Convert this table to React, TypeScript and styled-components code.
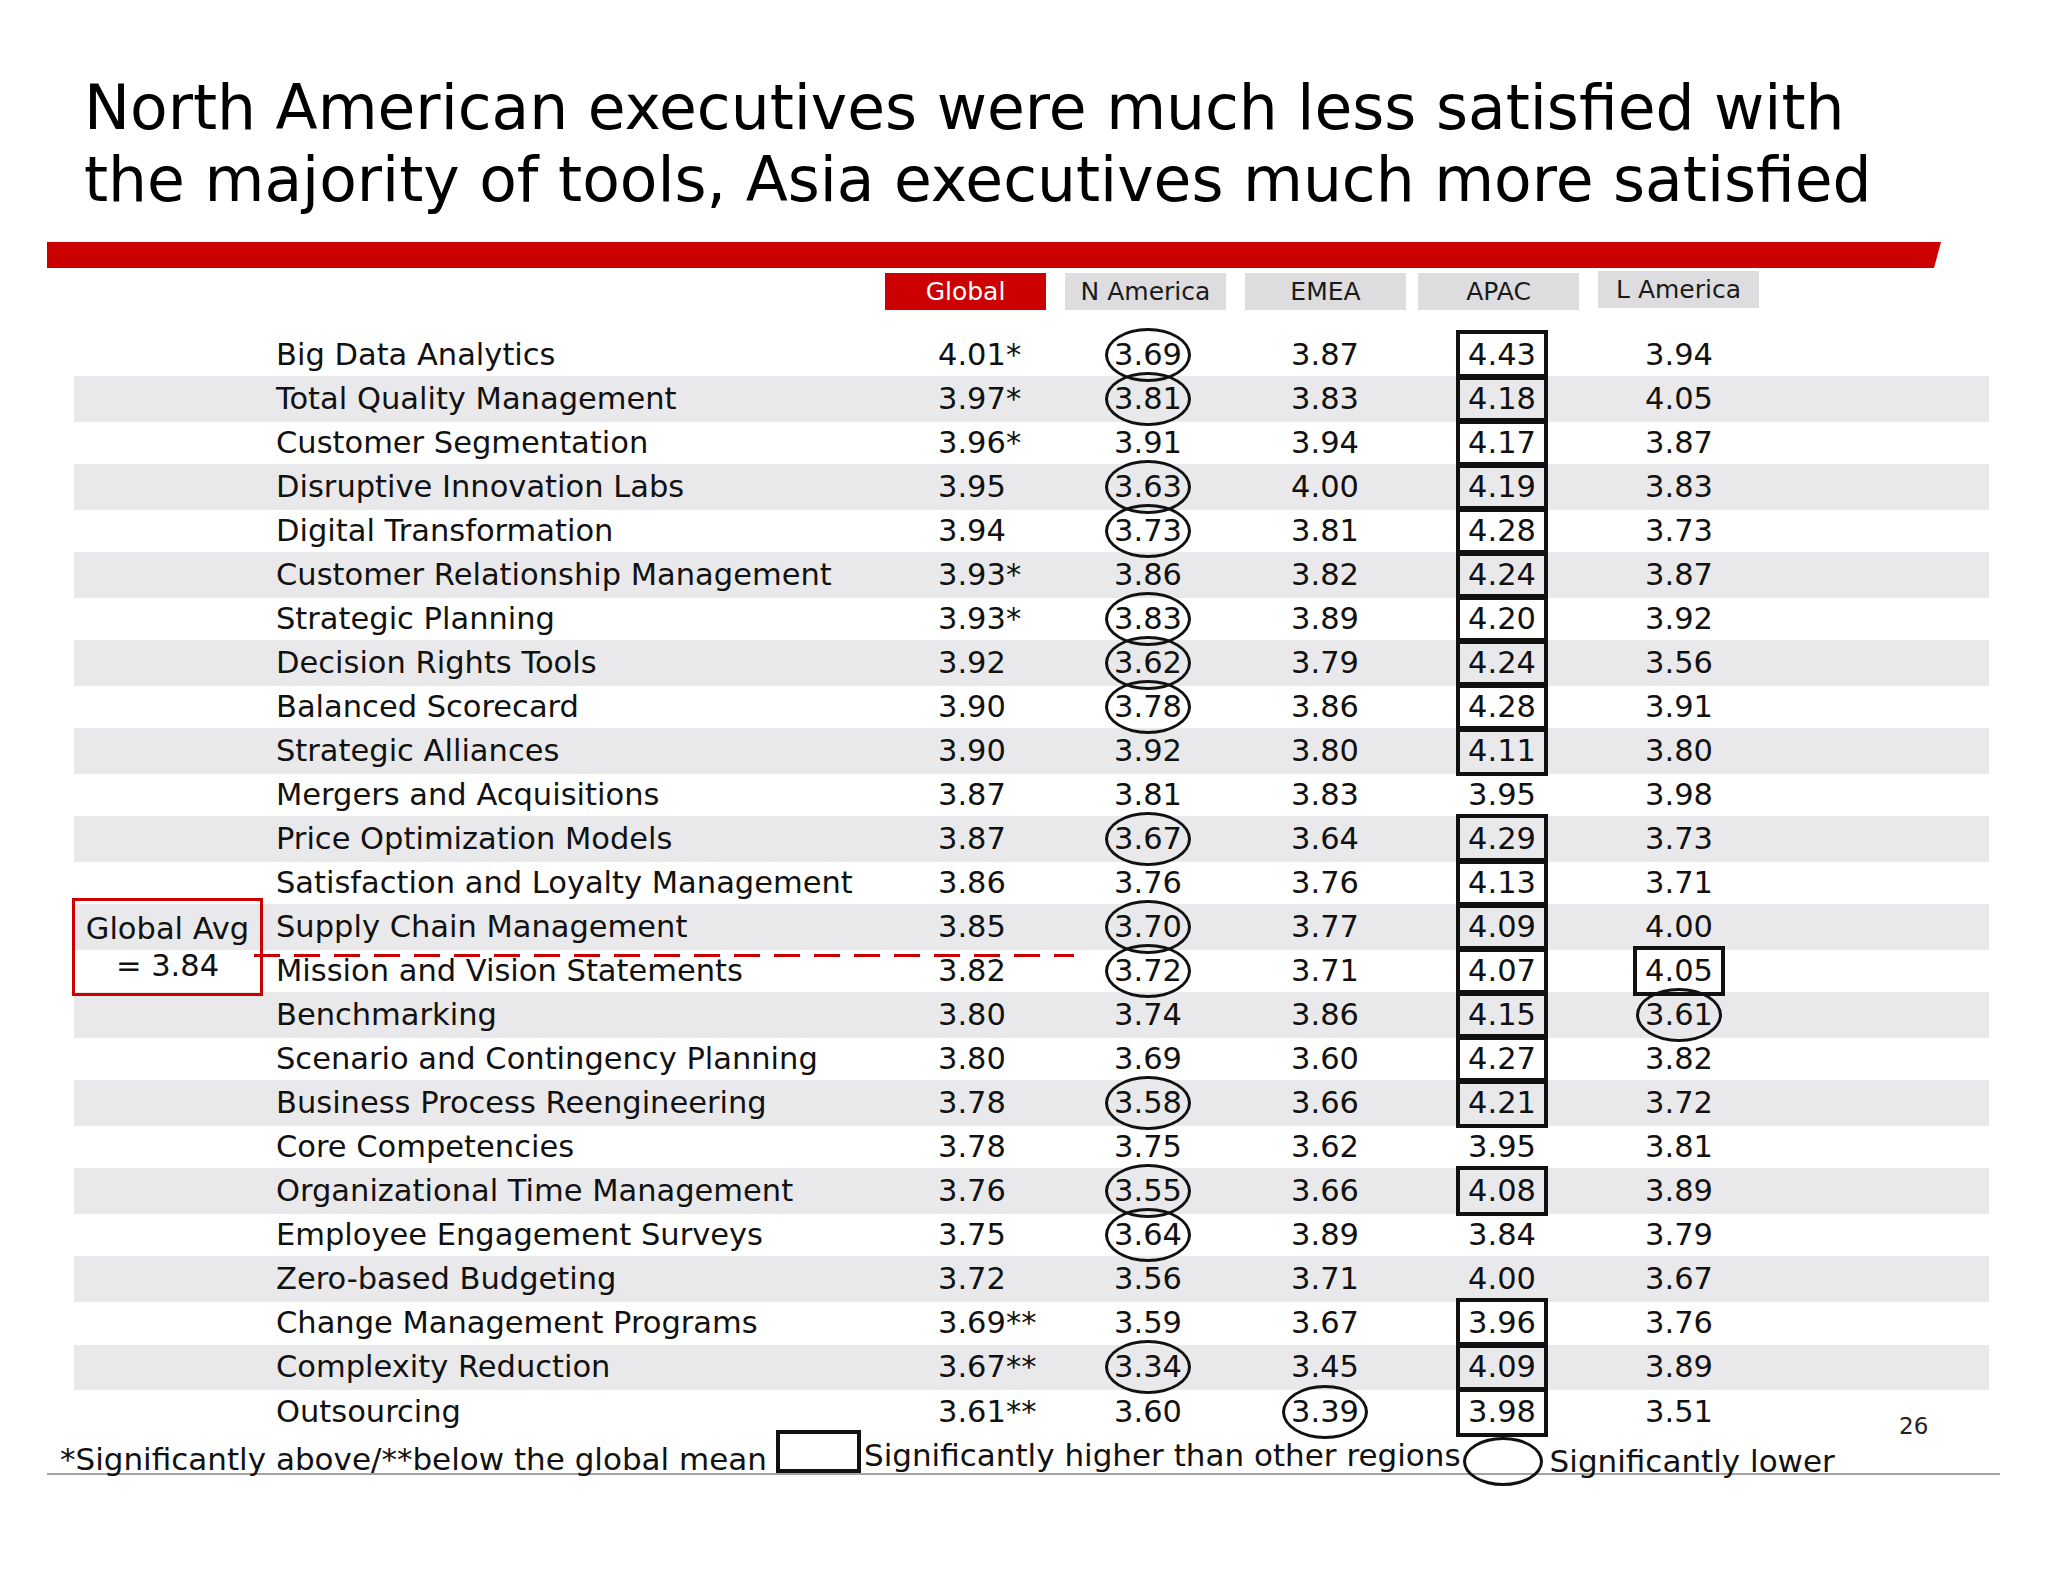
import React from "react";
import styled, { createGlobalStyle } from "styled-components";

const GlobalStyle = createGlobalStyle`
  html, body { margin: 0; padding: 0; background: #ffffff; }
  body { font-family: "DejaVu Sans", Verdana, sans-serif; color: #111; }
  * { box-sizing: border-box; }
`;

const FONT = `"DejaVu Sans", Verdana, sans-serif`;
const RED = "#cc0000";

type Mark = "circle" | "box" | undefined;
type Cell = { v: string; m?: Mark };

const c = (v: string): Cell => ({ v, m: "circle" });
const b = (v: string): Cell => ({ v, m: "box" });
const p = (v: string): Cell => ({ v });

const rows: { label: string; global: string; cells: Cell[] }[] = [
  { label: "Big Data Analytics", global: "4.01*", cells: [c("3.69"), p("3.87"), b("4.43"), p("3.94")] },
  { label: "Total Quality Management", global: "3.97*", cells: [c("3.81"), p("3.83"), b("4.18"), p("4.05")] },
  { label: "Customer Segmentation", global: "3.96*", cells: [p("3.91"), p("3.94"), b("4.17"), p("3.87")] },
  { label: "Disruptive Innovation Labs", global: "3.95", cells: [c("3.63"), p("4.00"), b("4.19"), p("3.83")] },
  { label: "Digital Transformation", global: "3.94", cells: [c("3.73"), p("3.81"), b("4.28"), p("3.73")] },
  { label: "Customer Relationship Management", global: "3.93*", cells: [p("3.86"), p("3.82"), b("4.24"), p("3.87")] },
  { label: "Strategic Planning", global: "3.93*", cells: [c("3.83"), p("3.89"), b("4.20"), p("3.92")] },
  { label: "Decision Rights Tools", global: "3.92", cells: [c("3.62"), p("3.79"), b("4.24"), p("3.56")] },
  { label: "Balanced Scorecard", global: "3.90", cells: [c("3.78"), p("3.86"), b("4.28"), p("3.91")] },
  { label: "Strategic Alliances", global: "3.90", cells: [p("3.92"), p("3.80"), b("4.11"), p("3.80")] },
  { label: "Mergers and Acquisitions", global: "3.87", cells: [p("3.81"), p("3.83"), p("3.95"), p("3.98")] },
  { label: "Price Optimization Models", global: "3.87", cells: [c("3.67"), p("3.64"), b("4.29"), p("3.73")] },
  { label: "Satisfaction and Loyalty Management", global: "3.86", cells: [p("3.76"), p("3.76"), b("4.13"), p("3.71")] },
  { label: "Supply Chain Management", global: "3.85", cells: [c("3.70"), p("3.77"), b("4.09"), p("4.00")] },
  { label: "Mission and Vision Statements", global: "3.82", cells: [c("3.72"), p("3.71"), b("4.07"), b("4.05")] },
  { label: "Benchmarking", global: "3.80", cells: [p("3.74"), p("3.86"), b("4.15"), c("3.61")] },
  { label: "Scenario and Contingency Planning", global: "3.80", cells: [p("3.69"), p("3.60"), b("4.27"), p("3.82")] },
  { label: "Business Process Reengineering", global: "3.78", cells: [c("3.58"), p("3.66"), b("4.21"), p("3.72")] },
  { label: "Core Competencies", global: "3.78", cells: [p("3.75"), p("3.62"), p("3.95"), p("3.81")] },
  { label: "Organizational Time Management", global: "3.76", cells: [c("3.55"), p("3.66"), b("4.08"), p("3.89")] },
  { label: "Employee Engagement Surveys", global: "3.75", cells: [c("3.64"), p("3.89"), p("3.84"), p("3.79")] },
  { label: "Zero-based Budgeting", global: "3.72", cells: [p("3.56"), p("3.71"), p("4.00"), p("3.67")] },
  { label: "Change Management Programs", global: "3.69**", cells: [p("3.59"), p("3.67"), b("3.96"), p("3.76")] },
  { label: "Complexity Reduction", global: "3.67**", cells: [c("3.34"), p("3.45"), b("4.09"), p("3.89")] },
  { label: "Outsourcing", global: "3.61**", cells: [p("3.60"), c("3.39"), b("3.98"), p("3.51")] },
];

const tabs: { name: string; shift: number; lift: number }[] = [
  { name: "Global", shift: 0, lift: 0 },
  { name: "N America", shift: 0, lift: 0 },
  { name: "EMEA", shift: 0, lift: 0 },
  { name: "APAC", shift: -7, lift: 0 },
  { name: "L America", shift: 0, lift: 2 },
];

const Slide = styled.div`
  position: relative;
  width: 2048px;
  height: 1582px;
  background: #ffffff;
  overflow: hidden;
`;

const Title = styled.h1`
  margin: 0;
  padding: 72px 0 0 84px;
  font-family: ${FONT};
  font-weight: 400;
  font-size: 61.5px;
  line-height: 72px;
  color: #000;
`;

const TitleLine = styled.span`
  display: block;
  white-space: nowrap;
`;

const RedBar = styled.div`
  margin: 26px 0 0 47px;
  width: 1894px;
  height: 26px;
  background: ${RED};
  clip-path: polygon(0 0, 100% 0, calc(100% - 7px) 100%, 0 100%);
`;

const TabRow = styled.div`
  display: flex;
  align-items: flex-start;
  gap: 19px;
  margin-top: 5px;
  padding-left: 885px;
`;

const Tab = styled.div<{ $active?: boolean; $shift: number; $lift: number }>`
  width: 161px;
  height: 37px;
  margin-left: ${(p) => p.$shift}px;
  transform: translateY(${(p) => -p.$lift}px);
  display: flex;
  align-items: center;
  justify-content: center;
  font-family: ${FONT};
  font-size: 25px;
  background: ${(p) => (p.$active ? RED : "#dddde0")};
  color: ${(p) => (p.$active ? "#ffffff" : "#1a1a1a")};
`;

const Table = styled.div`
  margin: 23.5px 0 0 74px;
  width: 1915px;
`;

const Row = styled.div<{ $shaded: boolean }>`
  display: grid;
  grid-template-columns: 605px 93px repeat(4, 120px);
  column-gap: 57px;
  align-items: center;
  padding-left: 202px;
  height: ${(p) => (p.$shaded ? "45.9px" : "42.2px")};
  background: ${(p) => (p.$shaded ? "#e9e9eb" : "transparent")};
  font-family: ${FONT};
  font-size: 30.5px;
  line-height: 36px;
  color: #111;
`;

const Label = styled.div`
  white-space: nowrap;
`;

const GlobalValue = styled.div`
  justify-self: start;
  white-space: nowrap;
`;

const Value = styled.span<{ $mark?: Mark }>`
  position: relative;
  justify-self: center;
  white-space: nowrap;
  &::after {
    content: "";
    display: ${(p) => (p.$mark ? "block" : "none")};
    position: absolute;
    left: 50%;
    top: 50%;
    transform: translate(-50%, -50%);
    width: ${(p) => (p.$mark === "box" ? "84px" : "80px")};
    height: ${(p) => (p.$mark === "box" ? "42px" : "48px")};
    border: ${(p) => (p.$mark === "box" ? "4px" : "3.3px")} solid #111;
    border-radius: ${(p) => (p.$mark === "circle" ? "50%" : "0")};
    pointer-events: none;
  }
`;

const AvgBox = styled.div`
  position: absolute;
  left: 72px;
  top: 898px;
  width: 191px;
  height: 98px;
  border: 3px solid ${RED};
  padding-top: 9px;
  text-align: center;
  font-family: ${FONT};
  font-size: 30.5px;
  line-height: 37px;
  color: #111;
`;

const DashLine = styled.div`
  position: absolute;
  left: 254px;
  top: 954px;
  width: 820px;
  height: 3px;
  background: repeating-linear-gradient(
    to right,
    ${RED} 0 26px,
    transparent 26px 40px
  );
`;

const PageNumber = styled.div`
  position: absolute;
  left: 1899px;
  top: 1411px;
  font-family: ${FONT};
  font-size: 23px;
  line-height: 30px;
  color: #222;
`;

const Legend = styled.div`
  display: flex;
  align-items: flex-end;
  margin: -6px 0 0 47px;
  width: 1953px;
  height: 48px;
  padding-left: 13px;
  border-bottom: 2px solid #a3a3a3;
  font-family: ${FONT};
  font-size: 31px;
  line-height: 36px;
  color: #111;
`;

const LegendText = styled.span<{ $lift?: number }>`
  white-space: nowrap;
  margin-bottom: ${(p) => p.$lift ?? 0}px;
`;

const LegendBox = styled.span`
  flex: none;
  width: 85px;
  height: 43px;
  margin: 0 3px 0 9px;
  border: 4px solid #111;
`;

const LegendOval = styled.span`
  flex: none;
  width: 80px;
  height: 49px;
  margin: 0 7px -13px 2px;
  border: 3px solid #111;
  border-radius: 50%;
`;

export default function App() {
  return (
    <>
      <GlobalStyle />
      <Slide>
        <Title>
          <TitleLine>North American executives were much less satisfied with</TitleLine>
          <TitleLine>the majority of tools, Asia executives much more satisfied</TitleLine>
        </Title>
        <RedBar />
        <TabRow>
          {tabs.map((t, i) => (
            <Tab key={t.name} $active={i === 0} $shift={t.shift} $lift={t.lift}>
              {t.name}
            </Tab>
          ))}
        </TabRow>
        <Table>
          {rows.map((r, i) => (
            <Row key={r.label} $shaded={i % 2 === 1}>
              <Label>{r.label}</Label>
              <GlobalValue>{r.global}</GlobalValue>
              {r.cells.map((cell, j) => (
                <Value key={j} $mark={cell.m}>
                  {cell.v}
                </Value>
              ))}
            </Row>
          ))}
        </Table>
        <Legend>
          <LegendText $lift={-4}>*Significantly above/**below the global mean</LegendText>
          <LegendBox />
          <LegendText $lift={0}>Significantly higher than other regions</LegendText>
          <LegendOval />
          <LegendText $lift={-6}>Significantly lower</LegendText>
        </Legend>
        <AvgBox>
          Global Avg
          <br />= 3.84
        </AvgBox>
        <DashLine />
        <PageNumber>26</PageNumber>
      </Slide>
    </>
  );
}
